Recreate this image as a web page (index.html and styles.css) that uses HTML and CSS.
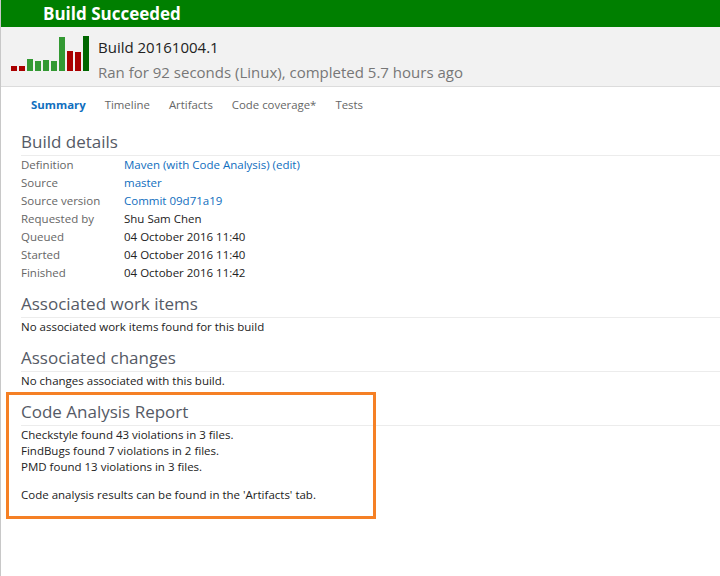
FILE: index.html
```html
<!DOCTYPE html>
<html lang="en">
<head>
<meta charset="utf-8">
<title>Build 20161004.1</title>
<link rel="stylesheet" href="styles.css">
</head>
<body>
<div class="page">
  <div class="banner">Build Succeeded</div>
  <div class="header">
    <div class="chart">
      <span class="bar red" style="height:5px"></span>
      <span class="bar red" style="height:5px"></span>
      <span class="bar green" style="height:12px"></span>
      <span class="bar green" style="height:10px"></span>
      <span class="bar green" style="height:11px"></span>
      <span class="bar green" style="height:10px"></span>
      <span class="bar green" style="height:34px"></span>
      <span class="bar red" style="height:20px"></span>
      <span class="bar red" style="height:19px"></span>
      <span class="bar dark" style="height:35px"></span>
    </div>
    <div class="titles">
      <div class="build-name">Build 20161004.1</div>
      <div class="build-meta">Ran for 92 seconds (Linux), completed 5.7 hours ago</div>
    </div>
  </div>
  <nav class="tabs">
    <a class="tab active">Summary</a>
    <a class="tab">Timeline</a>
    <a class="tab">Artifacts</a>
    <a class="tab">Code coverage*</a>
    <a class="tab">Tests</a>
  </nav>
  <main class="content">
    <section class="section first">
      <h2 class="section-title">Build details</h2>
      <div class="details">
        <div class="label">Definition</div><div class="value link">Maven (with Code Analysis) (edit)</div>
        <div class="label">Source</div><div class="value link">master</div>
        <div class="label">Source version</div><div class="value link">Commit 09d71a19</div>
        <div class="label">Requested by</div><div class="value">Shu Sam Chen</div>
        <div class="label">Queued</div><div class="value">04 October 2016 11:40</div>
        <div class="label">Started</div><div class="value">04 October 2016 11:40</div>
        <div class="label">Finished</div><div class="value">04 October 2016 11:42</div>
      </div>
    </section>
    <section class="section">
      <h2 class="section-title">Associated work items</h2>
      <p class="text">No associated work items found for this build</p>
    </section>
    <section class="section">
      <h2 class="section-title">Associated changes</h2>
      <p class="text">No changes associated with this build.</p>
    </section>
    <section class="section report">
      <div class="highlight"></div>
      <h2 class="section-title">Code Analysis Report</h2>
      <div class="report-body">
        <p class="line">Checkstyle found 43 violations in 3 files.</p>
        <p class="line">FindBugs found 7 violations in 2 files.</p>
        <p class="line">PMD found 13 violations in 3 files.</p>
        <p class="line note">Code analysis results can be found in the 'Artifacts' tab.</p>
      </div>
    </section>
  </main>
</div>
</body>
</html>
```
FILE: styles.css
```css
* { box-sizing: border-box; }
html, body { margin: 0; padding: 0; background: #fff; }
body {
  font-family: "Open Sans", "Noto Sans", "Liberation Sans", sans-serif;
  color: #222;
}
.page {
  border-left: 1px solid #c8c8c8;
  min-height: 576px;
}
.banner {
  height: 27px;
  background: #007f00;
  color: #fff;
  font-weight: 700;
  font-size: 17px;
  line-height: 27px;
  padding-left: 42px;
}
.header {
  height: 60px;
  background: #f2f2f2;
  border-bottom: 1px solid #dcdcdc;
  display: flex;
  align-items: flex-start;
  padding-left: 10px;
}
.chart {
  display: flex;
  align-items: flex-end;
  gap: 2px;
  height: 44px;
}
.bar { display: block; width: 6px; }
.bar.red { background: #aa0000; }
.bar.green { background: #339933; }
.bar.dark { background: #006600; }
.titles { margin-left: 9px; padding-top: 9px; }
.build-name { font-size: 15px; line-height: 22px; color: #222; }
.build-meta { font-size: 15px; line-height: 22px; color: #777; margin-top: 3px; }
.tabs {
  display: flex;
  gap: 19px;
  padding-left: 30px;
  padding-bottom: 7px;
  height: 42px;
  align-items: center;
  font-size: 11.4px;
}
.tab { color: #666; }
.tab.active { color: #106ebe; font-weight: 700; }
.content { padding-left: 20px; }
.section { margin-top: 9px; }
.section.first { margin-top: 0; }
.section-title {
  margin: 0;
  font-weight: 400;
  font-size: 17px;
  line-height: 26px;
  color: #555a66;
  border-bottom: 1px solid #ececec;
}
.details {
  display: grid;
  grid-template-columns: 103px auto;
  font-size: 11.5px;
  line-height: 18px;
}
.label { color: #666; }
.value { color: #222; }
.value.link { color: #106ebe; }
.text { margin: 0; font-size: 11.5px; line-height: 18px; color: #222; }
.report { position: relative; }
.highlight {
  position: absolute;
  left: -15px;
  top: -7px;
  width: 370px;
  height: 127px;
  border: 3px solid #f58025;
}
.report-body { font-size: 11.5px; line-height: 16px; padding-top: 1px; }
.line { margin: 0; }
.line.note { margin-top: 12px; }
```
